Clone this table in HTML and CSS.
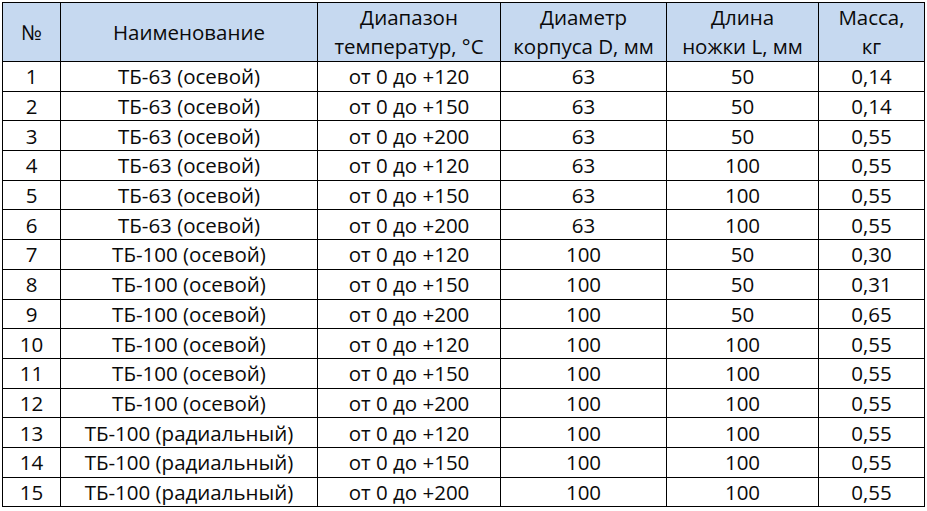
FILE: index.html
```html
<!DOCTYPE html>
<html lang="ru">
<head>
<meta charset="utf-8">
<title>ТБ</title>
<link rel="stylesheet" href="styles.css">
</head>
<body>
<div class="page">
<table class="spec">
<colgroup>
<col class="c-num"><col class="c-name"><col class="c-temp"><col class="c-diam"><col class="c-len"><col class="c-mass">
</colgroup>
<thead>
<tr>
<th>№</th>
<th>Наименование</th>
<th>Диапазон<br>температур, °C</th>
<th>Диаметр<br>корпуса D, мм</th>
<th>Длина<br>ножки L, мм</th>
<th>Масса,<br>кг</th>
</tr>
</thead>
<tbody>
<tr><td>1</td><td>ТБ-63 (осевой)</td><td>от 0 до +120</td><td>63</td><td>50</td><td>0,14</td></tr>
<tr><td>2</td><td>ТБ-63 (осевой)</td><td>от 0 до +150</td><td>63</td><td>50</td><td>0,14</td></tr>
<tr><td>3</td><td>ТБ-63 (осевой)</td><td>от 0 до +200</td><td>63</td><td>50</td><td>0,55</td></tr>
<tr><td>4</td><td>ТБ-63 (осевой)</td><td>от 0 до +120</td><td>63</td><td>100</td><td>0,55</td></tr>
<tr><td>5</td><td>ТБ-63 (осевой)</td><td>от 0 до +150</td><td>63</td><td>100</td><td>0,55</td></tr>
<tr><td>6</td><td>ТБ-63 (осевой)</td><td>от 0 до +200</td><td>63</td><td>100</td><td>0,55</td></tr>
<tr><td>7</td><td>ТБ-100 (осевой)</td><td>от 0 до +120</td><td>100</td><td>50</td><td>0,30</td></tr>
<tr><td>8</td><td>ТБ-100 (осевой)</td><td>от 0 до +150</td><td>100</td><td>50</td><td>0,31</td></tr>
<tr><td>9</td><td>ТБ-100 (осевой)</td><td>от 0 до +200</td><td>100</td><td>50</td><td>0,65</td></tr>
<tr><td>10</td><td>ТБ-100 (осевой)</td><td>от 0 до +120</td><td>100</td><td>100</td><td>0,55</td></tr>
<tr><td>11</td><td>ТБ-100 (осевой)</td><td>от 0 до +150</td><td>100</td><td>100</td><td>0,55</td></tr>
<tr><td>12</td><td>ТБ-100 (осевой)</td><td>от 0 до +200</td><td>100</td><td>100</td><td>0,55</td></tr>
<tr><td>13</td><td>ТБ-100 (радиальный)</td><td>от 0 до +120</td><td>100</td><td>100</td><td>0,55</td></tr>
<tr><td>14</td><td>ТБ-100 (радиальный)</td><td>от 0 до +150</td><td>100</td><td>100</td><td>0,55</td></tr>
<tr><td>15</td><td>ТБ-100 (радиальный)</td><td>от 0 до +200</td><td>100</td><td>100</td><td>0,55</td></tr>
</tbody>
</table>
</div>
</body>
</html>
```
FILE: styles.css
```css
html, body {
  margin: 0;
  padding: 0;
  background: #ffffff;
}
.page {
  padding: 2px 0 0 2px;
}
.spec {
  border-collapse: collapse;
  table-layout: fixed;
  width: 922px;
  font-family: "Open Sans", "Liberation Sans", sans-serif;
  font-size: 20.5px;
  color: #0a0a0a;
}
.c-num { width: 58px; }
.c-name { width: 257px; }
.c-temp { width: 183px; }
.c-diam { width: 166px; }
.c-len { width: 152px; }
.c-mass { width: 106px; }
.spec th,
.spec td {
  border: 1px solid #000;
  padding: 0;
  text-align: center;
  vertical-align: middle;
  font-weight: normal;
  white-space: nowrap;
}
.spec th {
  background: #c6d9f0;
  height: 58px;
  line-height: 29px;
}
.spec td {
  height: 28.7px;
  line-height: 28px;
}
```
